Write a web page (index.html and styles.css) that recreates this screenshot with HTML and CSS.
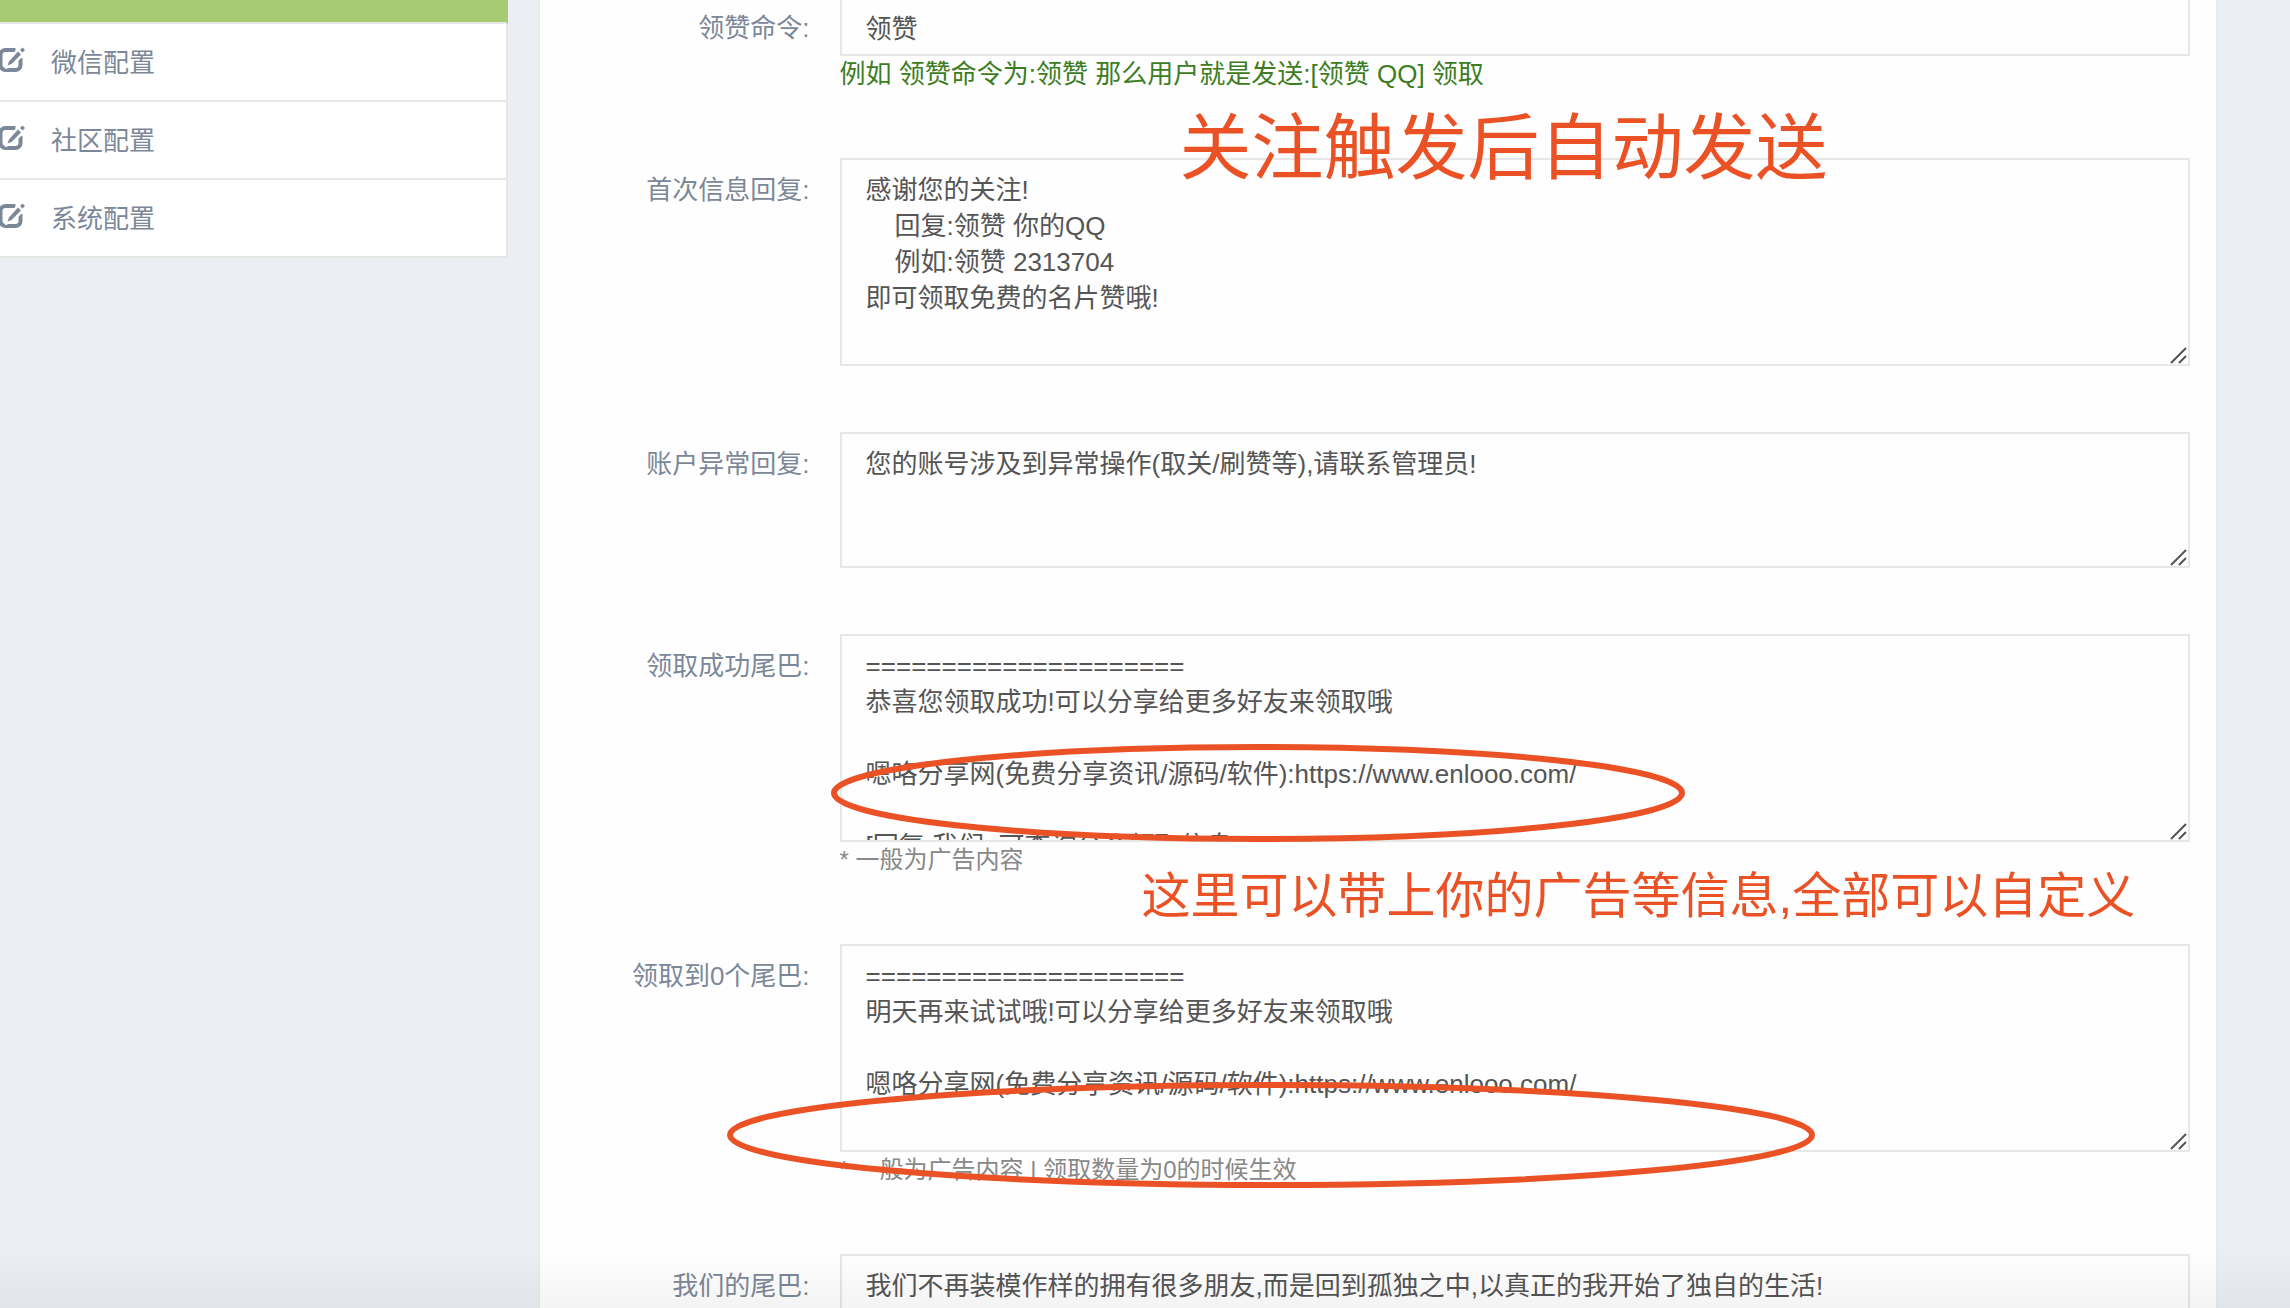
FILE: index.html
```html
<!DOCTYPE html>
<html lang="zh-CN">
<head>
    <meta charset="UTF-8">
    <meta name="viewport" content="width=device-width, initial-scale=1.0">
    <title>微信配置</title>
    <link rel="stylesheet" href="styles.css">
</head>
<body>

    <svg class="sprite" aria-hidden="true">
        <symbol id="icon-edit" viewBox="0 0 28 28">
            <path d="M17.5 4H7.500a5 5 0 0 0-5 5v10a5 5 0 0 0 5 5h10a5 5 0 0 0 5-5V12" fill="none" stroke="currentColor" stroke-width="4"/>
            <path d="M20 4l5 4-11.500 11.500-4.500 1.500 1-5z" fill="#fff" stroke="#fff" stroke-width="3"/>
            <path d="M20 5.500l3 3L13.500 18l-4 1.500 1.500-4z" fill="currentColor"/>
            <path d="M24.500 1.500l2.500 2.500-2.500 2.500-2.500-2.500z" fill="currentColor"/>
        </symbol>
    </svg>

    <div class="page">
        <aside class="sidebar">
            <ul class="menu">
                <li class="active"></li>
                <li><a href="#"><svg class="icon"><use href="#icon-edit"/></svg>微信配置</a></li>
                <li><a href="#"><svg class="icon"><use href="#icon-edit"/></svg>社区配置</a></li>
                <li><a href="#"><svg class="icon"><use href="#icon-edit"/></svg>系统配置</a></li>
            </ul>
        </aside>

        <main class="portlet">
            <form class="form">
                <div class="form-group">
                    <label for="command">领赞命令:</label>
                    <div class="field">
                        <input type="text" id="command" class="form-control" value="领赞">
                        <p class="help success">例如 领赞命令为:领赞 那么用户就是发送:[领赞 QQ] 领取</p>
                    </div>
                </div>

                <div class="form-group">
                    <label for="first-reply">首次信息回复:</label>
                    <div class="field">
                        <textarea id="first-reply" class="form-control tall">感谢您的关注!
    回复:领赞 你的QQ
    例如:领赞 2313704
即可领取免费的名片赞哦!</textarea>
                        <div class="note note-follow">关注触发后自动发送</div>
                    </div>
                </div>

                <div class="form-group">
                    <label for="error-reply">账户异常回复:</label>
                    <div class="field">
                        <textarea id="error-reply" class="form-control">您的账号涉及到异常操作(取关/刷赞等),请联系管理员!</textarea>
                    </div>
                </div>

                <div class="form-group">
                    <label for="success-tail">领取成功尾巴:</label>
                    <div class="field">
                        <textarea id="success-tail" class="form-control tall">=====================
恭喜您领取成功!可以分享给更多好友来领取哦

嗯咯分享网(免费分享资讯/源码/软件):https://www.enlooo.com/

[回复 我们  可查询公众领取信息]</textarea>
                        <p class="help">* 一般为广告内容</p>
                        <svg class="ring ring-success" viewBox="0 0 856 100"><ellipse cx="428" cy="50" rx="424" ry="46"/></svg>
                        <div class="note note-ad">这里可以带上你的广告等信息,全部可以自定义</div>
                    </div>
                </div>

                <div class="form-group">
                    <label for="zero-tail">领取到0个尾巴:</label>
                    <div class="field">
                        <textarea id="zero-tail" class="form-control tall">=====================
明天再来试试哦!可以分享给更多好友来领取哦

嗯咯分享网(免费分享资讯/源码/软件):https://www.enlooo.com/</textarea>
                        <p class="help">* 一般为广告内容 | 领取数量为0的时候生效</p>
                        <svg class="ring ring-zero" viewBox="0 0 1090 108"><ellipse cx="545" cy="54" rx="541" ry="50"/></svg>
                    </div>
                </div>

                <div class="form-group">
                    <label for="our-tail">我们的尾巴:</label>
                    <div class="field">
                        <textarea id="our-tail" class="form-control">我们不再装模作样的拥有很多朋友,而是回到孤独之中,以真正的我开始了独自的生活!</textarea>
                    </div>
                </div>
            </form>
        </main>
    </div>
    <div class="bottom-shade"></div>

</body>
</html>
```
FILE: styles.css
```css
* {
    box-sizing: border-box;
    margin: 0;
    padding: 0;
}
body {
    font-family: "Liberation Sans", "Noto Sans CJK SC", sans-serif;
    font-size: 26px;
    line-height: 36px;
    color: #555;
    background-color: #ebeff4;
}
.sprite {
    display: none;
}
.page {
    display: flex;
    align-items: flex-start;
    gap: 30px;
    height: 100vh;
    overflow: hidden;
}

/* sidebar */
.sidebar {
    flex: 0 0 508px;
}
.menu {
    list-style: none;
}
.menu li {
    height: 78px;
    background-color: #fff;
    border: 2px solid #e7e7e7;
    border-width: 0 2px 2px 0;
}
.menu .active {
    height: 24px;
    background-color: #a7cb73;
    border-right-color: #a7cb73;
}
.menu a {
    display: flex;
    align-items: center;
    height: 100%;
    padding-top: 2px;
    color: #7c8898;
    text-decoration: none;
}
.icon {
    width: 28px;
    height: 28px;
    margin: 0 25px 6px -2px;
}

/* form panel */
.portlet {
    flex: 1;
    min-height: 100%;
    margin-right: 72px;
    background-color: #fefefe;
    border: 2px solid #e7ebf2;
    border-width: 0 2px;
    padding: 0 26px;
}
.form-group {
    display: grid;
    grid-template-columns: 15% 1fr;
    column-gap: 30px;
    margin-bottom: 66px;
}
.form-group label {
    padding-top: 14px;
    text-align: right;
    color: #7c8898;
}
.form-group:first-child {
    margin-top: -4px;
}
.field {
    position: relative;
}
.form-control {
    display: block;
    width: 100%;
    height: 136px;
    padding: 12px 24px;
    font: inherit;
    color: #555;
    background-color: transparent;
    border: 2px solid #e7e7e7;
    border-radius: 0;
    outline: none;
}
input.form-control {
    height: 60px;
}
textarea.form-control {
    resize: none;
    scrollbar-width: none;
    background: url("data:image/svg+xml,%3Csvg xmlns='http://www.w3.org/2000/svg' width='20' height='20'%3E%3Cpath d='M3 19L18 4M11 19l7-7' stroke='%23555' stroke-width='2'/%3E%3C/svg%3E") right bottom no-repeat;
}
textarea.tall {
    height: 208px;
}
.help {
    height: 36px;
    font-size: 24px;
    color: #888;
}
.help.success {
    font-size: 26px;
    color: #3c7d22;
}

/* red marks over the form */
.note {
    position: absolute;
    color: #ea5226;
    white-space: nowrap;
}
.note-follow {
    top: -55px;
    left: 340px;
    font-size: 72px;
    line-height: 90px;
}
.note-ad {
    top: 232px;
    left: 302px;
    font-size: 49px;
    line-height: 60px;
}
.ring {
    position: absolute;
    fill: none;
    stroke: #ea5226;
    stroke-width: 6px;
    pointer-events: none;
}
.ring-success {
    top: 109px;
    left: -10px;
    width: 856px;
    height: 100px;
}
.ring-zero {
    top: 137px;
    left: -114px;
    width: 1090px;
    height: 108px;
}
.bottom-shade {
    position: fixed;
    right: 0;
    bottom: 0;
    left: 0;
    height: 60px;
    background: linear-gradient(rgba(0, 0, 0, 0), rgba(0, 0, 0, 0.04));
    pointer-events: none;
}
```
